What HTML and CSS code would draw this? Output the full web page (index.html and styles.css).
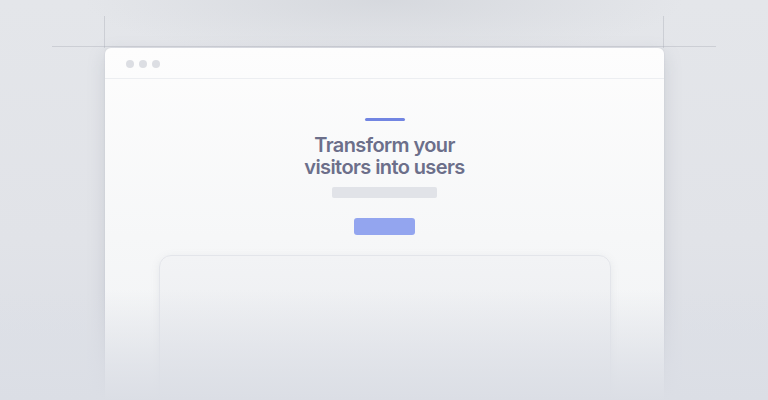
FILE: index.html
```html
<!DOCTYPE html>
<html lang="en">
<head>
<meta charset="utf-8">
<title>Transform your visitors into users</title>
<link rel="stylesheet" href="styles.css">
</head>
<body>
<div class="stage">
  <div class="guide guide-h"></div>
  <div class="guide guide-vl"></div>
  <div class="guide guide-vr"></div>
  <div class="window">
    <div class="window-bar">
      <span class="dot"></span><span class="dot"></span><span class="dot"></span>
    </div>
    <div class="window-body">
      <div class="accent"></div>
      <h1 class="title">Transform your<br>visitors into users</h1>
      <div class="subline"></div>
      <div class="cta"></div>
      <div class="card"></div>
    </div>
  </div>
  <div class="fade"></div>
</div>
</body>
</html>
```

FILE: styles.css
```css
* { box-sizing: border-box; }
html, body { margin: 0; padding: 0; }
body {
  width: 768px;
  height: 400px;
  overflow: hidden;
  font-family: Inter, "Noto Sans", sans-serif;
  background: linear-gradient(180deg, #e4e6ea 0%, #e1e3e8 60%, #dbdee5 100%);
}
.stage {
  position: relative;
  width: 768px;
  height: 400px;
  overflow: hidden;
  padding-top: 48px;
  background: radial-gradient(ellipse 300px 60px at 384px 0px, rgba(205,208,214,0.6), rgba(205,208,214,0));
}
.guide { position: absolute; background: rgba(160,164,175,0.35); }
.guide-h { left: 52px; width: 664px; top: 46px; height: 1px; }
.guide-vl { left: 104px; top: 16px; width: 1px; height: 32px; }
.guide-vr { left: 663px; top: 16px; width: 1px; height: 32px; }
.window {
  margin-left: 105px;
  width: 559px;
  height: 420px;
  border-radius: 6px 6px 0 0;
  background: linear-gradient(180deg, #fdfdfd 0%, #f6f7f8 45%, #eef0f2 100%);
  box-shadow: 0 6px 18px rgba(120,126,140,0.22), 0 0 2px rgba(120,126,140,0.2);
  display: flex;
  flex-direction: column;
}
.window-bar {
  height: 31px;
  border-bottom: 1px solid #eceef1;
  display: flex;
  align-items: center;
  gap: 5px;
  padding-left: 21px;
  padding-top: 1px;
}
.dot { width: 8px; height: 8px; border-radius: 50%; background: #dcdee3; }
.window-body {
  display: flex;
  flex-direction: column;
  align-items: center;
  padding-top: 39px;
}
.accent {
  width: 40px; height: 3px; border-radius: 2px;
  background: #7285e2;
}
.title {
  margin: 13px 0 0;
  font-size: 20px;
  line-height: 22px;
  font-weight: 600;
  letter-spacing: -0.6px;
  color: #6c6f8a;
  text-align: center;
}
.subline {
  margin-top: 9px;
  width: 105px; height: 11px; border-radius: 2px;
  background: #e1e3e8;
}
.cta {
  margin-top: 20px;
  width: 61px; height: 17px; border-radius: 3px;
  background: #93a5ef;
}
.card {
  margin-top: 20px;
  width: 452px; height: 200px;
  border-radius: 12px;
  border: 1px solid #e3e5ea;
  background: linear-gradient(180deg, #f2f3f5 0%, #e6e8ec 100%);
  box-shadow: 0 2px 8px rgba(130,136,150,0.12);
}
.fade {
  position: absolute;
  left: 0; right: 0; bottom: 0;
  height: 110px;
  background: linear-gradient(180deg, rgba(220,223,230,0) 0%, rgba(220,223,230,0.75) 70%, #dbdee5 100%);
}
```
